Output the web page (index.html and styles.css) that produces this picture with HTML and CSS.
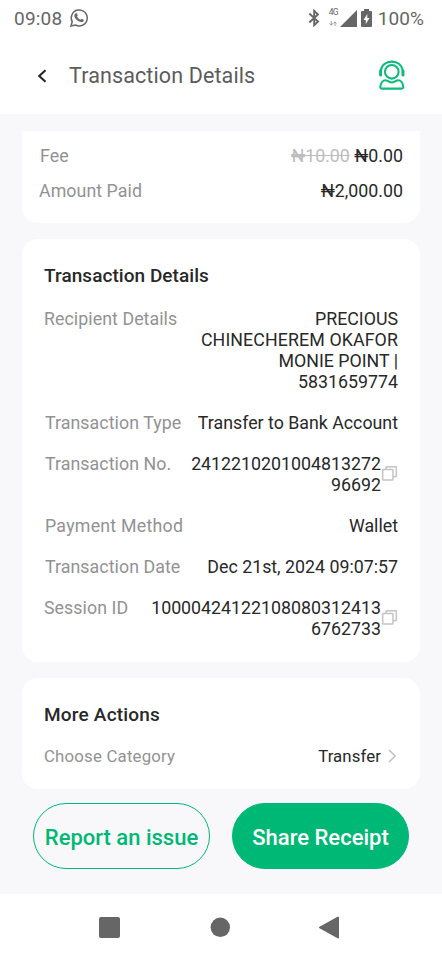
FILE: index.html
```html
<!DOCTYPE html>
<html lang="en">
<head>
<meta charset="utf-8">
<title>Transaction Details</title>
<link rel="stylesheet" href="styles.css">
</head>
<body>
<div class="status">
  <span class="clock">09:08</span>
  <svg class="whatsapp" viewBox="0 0 20 20" width="20" height="20" fill="none" stroke="#666" stroke-width="1.5"><path d="M2 18l1.200-4.200A8 8 0 1 1 6.400 17z"/><path fill="#666" stroke="none" d="M6.900 5.200c.5-.3.9-.1 1.100.4l.7 1.600c.1.5-.6 1-.7 1.300.8 1.600 1.900 2.600 3.500 3.300.4-.2.9-1.100 1.300-1l1.800.9c.4.3.1 1.300-.4 1.700-1.200 1-2.900.7-4.500-.1-1.900-1-3.400-2.700-4.100-4.300-.6-1.600-.2-3.100 1.300-3.800z"/></svg>
  <span class="spacer"></span>
  <svg class="bluetooth" viewBox="0 0 12 18" width="12" height="18" fill="none" stroke="#666" stroke-width="1.9"><path d="M1.300 4.500l8.700 8L6.200 16.200V1.800L10 5.500l-8.700 8"/></svg>
  <span class="net"><span>4G</span><svg viewBox="0 0 8 5" width="8" height="5" fill="none" stroke="#888" stroke-width=".8"><path d="M2.200 0v4M.5 2.500l1.700 1.700 1.700-1.700M6 5V1M4.300 2.500L6 .8l1.700 1.700"/></svg></span>
  <svg class="signal" viewBox="0 0 17 17" width="17" height="17"><path fill="#666" d="M17 0v17H0z"/></svg>
  <svg class="battery" viewBox="0 0 11 18" width="11" height="18"><path fill="#666" d="M3 0h5v2h2q1 0 1 1v14q0 1-1 1H1q-1 0-1-1V3q0-1 1-1h2z"/><path fill="#fff" d="M6.300 5L2.500 11h2.300v4l3.700-6H6.300z"/></svg>
  <span class="percent">100%</span>
</div>
<header class="bar">
  <svg class="back" viewBox="0 0 10 14" width="10" height="14" fill="none" stroke="#222" stroke-width="2"><path d="M8.500 1.200L2.200 7l6.300 5.800"/></svg>
  <h1>Transaction Details</h1>
  <svg class="support" viewBox="0 0 28 32" width="28" height="32" fill="none" stroke="#0bbd7b" stroke-width="2.100" stroke-linecap="round" stroke-linejoin="round"><circle cx="13.800" cy="12.800" r="6.800"/><path d="M2.800 11.500C3.500 6 8 2.600 13.800 2.600S24.100 6 24.800 11.500"/><path stroke-width="3" d="M2.600 12v4M25 12v4"/><path d="M7.500 21.200c2.200 0 3 2.300 6.300 2.300s4.100-2.300 6.300-2.300c3 0 4.900 3.200 5.200 6.700.1 1-.5 1.700-1.500 1.700H3.800c-1 0-1.600-.7-1.500-1.700C2.600 24.400 4.500 21.200 7.500 21.200z"/></svg>
</header>
<main>
  <section class="card totals">
    <div class="row"><span class="label inset">Fee</span><span class="value"><s>₦10.00</s> ₦0.00</span></div>
    <div class="row"><span class="label">Amount Paid</span><span class="value">₦2,000.00</span></div>
  </section>
  <section class="card details">
    <h2>Transaction Details</h2>
    <div class="row"><span class="label">Recipient Details</span><span class="value">PRECIOUS<br><span class="name">CHINECHEREM OKAFOR</span><br>MONIE POINT |<br>5831659774</span></div>
    <div class="row"><span class="label inset">Transaction Type</span><span class="value">Transfer to Bank Account</span></div>
    <div class="row"><span class="label inset">Transaction No.</span><span class="copyable"><span class="value">2412210201004813272<br>96692</span><svg class="copy" viewBox="0 0 17 17" width="17" height="17" fill="none" stroke="#c4c4c4" stroke-width="1.500" stroke-linejoin="round"><rect x="1.700" y="4.500" width="10.300" height="10.500" rx=".6"/><path d="M5 4.500l.3-2.800h10v9.500l-3.300.8"/></svg></span></div>
    <div class="row"><span class="label inset method">Payment Method</span><span class="value">Wallet</span></div>
    <div class="row"><span class="label inset">Transaction Date</span><span class="value">Dec 21st, 2024 09:07:57</span></div>
    <div class="row"><span class="label">Session ID</span><span class="copyable"><span class="value">10000424122108080312413<br>6762733</span><svg class="copy" viewBox="0 0 17 17" width="17" height="17" fill="none" stroke="#c4c4c4" stroke-width="1.500" stroke-linejoin="round"><rect x="1.700" y="4.500" width="10.300" height="10.500" rx=".6"/><path d="M5 4.500l.3-2.800h10v9.500l-3.300.8"/></svg></span></div>
  </section>
  <section class="card more">
    <h2>More Actions</h2>
    <div class="row"><span class="label">Choose Category</span><span class="value">Transfer<svg class="chevron" viewBox="0 0 9 14" width="9" height="14" fill="none" stroke="#c0c0c0" stroke-width="1.500"><path d="M1 1l6.200 6L1 13"/></svg></span></div>
  </section>
  <div class="actions">
    <button class="outline">Report an issue</button>
    <button class="solid">Share Receipt</button>
  </div>
</main>
<nav>
  <svg viewBox="0 0 21 21" width="21" height="21"><rect width="21" height="21" rx="2" fill="#666"/></svg>
  <svg viewBox="0 0 20 20" width="20" height="20"><circle cx="10.300" cy="10.300" r="9.700" fill="#666"/></svg>
  <svg viewBox="0 0 20 23" width="20" height="23"><path fill="#666" stroke="#666" stroke-width="2" stroke-linejoin="round" d="M19 1.500v20L1 11.500z"/></svg>
</nav>
</body>
</html>
```
FILE: styles.css
```css
* { box-sizing: border-box; }
body { margin: 0; width: 442px; height: 960px; background: #fff; color: #282828; font: 17.8px/21px Roboto, sans-serif; overflow: hidden; }
svg { display: block; flex: none; }
h1, h2 { margin: 0; }
.status { height: 36px; padding: 0 18px 0 14px; display: flex; align-items: center; color: #666; }
.clock { padding-top: 1px; font-size: 19px; letter-spacing: .2px; }
.whatsapp { margin-left: 7px; }
.spacer { flex: 1; }
.bluetooth { margin-right: 9px; }
.net { width: 10px; display: flex; flex-direction: column; gap: 5px; font-size: 8.500px; line-height: 8px; letter-spacing: -.6px; }
.net span { margin-top: -3px; }
.signal { margin-left: 1px; }
.battery { margin: 0 6px 0 4px; }
.percent { padding-top: 1px; font-size: 19px; letter-spacing: .1px; }
.bar { height: 78px; padding: 0 36px 0 37px; display: flex; align-items: center; }
.back { margin: 1px 22px 0 0; }
h1 { flex: 1; padding-top: 2px; font-size: 21.500px; line-height: 28px; font-weight: 400; letter-spacing: .12px; color: #5c5c5c; }
main { height: 780px; padding: 17px 22px 0; background: #f8f8fa; }
.card { background: #fff; border-radius: 16px; }
.row { display: flex; justify-content: space-between; align-items: flex-start; }
.label { color: #929292; letter-spacing: .06px; white-space: nowrap; }
.value { text-align: right; white-space: nowrap; }
.name { letter-spacing: .1px; }
.inset { padding-left: 1px; }
.method { letter-spacing: .24px; }
.totals { height: 92px; padding: 14px 17px 0; border-radius: 0 0 16px 16px; display: flex; flex-direction: column; gap: 14px; }
.totals s { color: #bdbdbd; }
.details { height: 423px; margin-top: 16px; padding: 26px 22px 0; display: flex; flex-direction: column; gap: 20px; }
h2 { font-size: 19px; line-height: 22px; font-weight: 500; letter-spacing: .05px; }
.details h2 { margin-bottom: 1px; }
.copyable { display: flex; align-items: center; }
.copy { margin-top: -2px; }
.more { height: 111px; margin-top: 16px; padding: 26px 22px 0; }
.more h2 { letter-spacing: .2px; }
.more .row { margin-top: 20px; font-size: 16.800px; }
.more .label { letter-spacing: .2px; }
.more .value { display: flex; align-items: center; letter-spacing: .1px; }
.chevron { margin: -2px 1px 0 7px; }
.actions { display: flex; justify-content: space-between; margin-top: 14px; padding: 0 11px; }
button { width: 177px; height: 66px; padding: 4px 0 0; border: 1px solid #00b875; border-radius: 33px; font: 500 22px/26px Roboto, sans-serif; white-space: nowrap; }
.outline { background: transparent; color: #00b875; }
.solid { background: #00b875; color: #fff; }
nav { height: 66px; padding: 0 103px 0 99px; display: flex; justify-content: space-between; align-items: center; }
```
